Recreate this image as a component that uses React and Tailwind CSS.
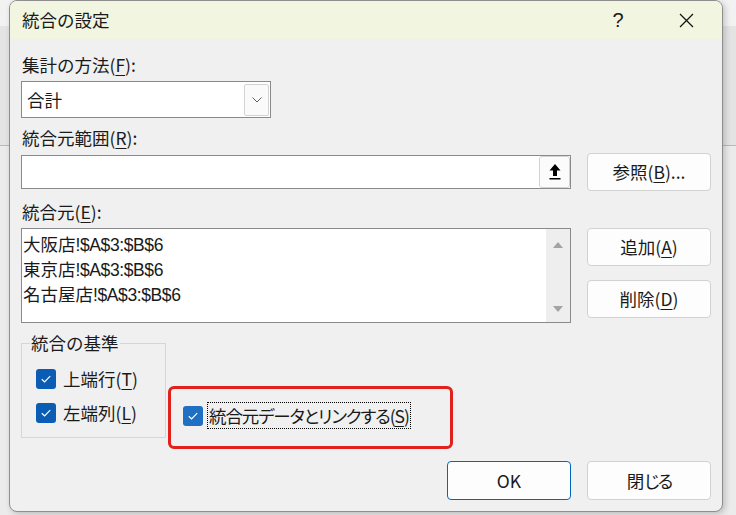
import React from "react";

const Key = ({ children }) => (
  <u className="underline decoration-1 underline-offset-[3px]">{children}</u>
);

const Check = ({ light }) => (
  <span
    className={`flex h-[20px] w-[20px] shrink-0 items-center justify-center rounded-[3px] ${
      light ? "bg-[#1f6fc2]" : "bg-[#0b5cb5]"
    }`}
  >
    <svg width="12" height="10" viewBox="0 0 12 10" fill="none" stroke="white" strokeWidth="1.2">
      <path d="M1.8 5.2 4.6 7.9 10.2 2.2" />
    </svg>
  </span>
);

const Btn = ({ children, primary, className = "" }) => (
  <button
    className={`flex w-[124px] items-center justify-center rounded-[4px] border bg-[#fdfdfd] ${
      primary ? "border-[#0067c0]" : "border-[#d1d1d1]"
    } ${className}`}
  >
    {children}
  </button>
);

const Ref = ({ children }) => (
  <span className="font-['Liberation_Sans',sans-serif] tracking-[-0.4px]">{children}</span>
);

export default function App() {
  return (
    <div className="h-[515px] w-[736px] overflow-hidden bg-[#ebebeb] bg-[linear-gradient(to_bottom,#f2f2f2_0,#f2f2f2_26px,#e4e4e4_26px,#e4e4e4_145px,#b9b9b9_145px,#b9b9b9_146px,transparent_146px),linear-gradient(#cdcdcd_1px,transparent_1px),linear-gradient(90deg,#cdcdcd_1px,transparent_1px)] bg-[length:100%_100%,104px_36px,104px_36px] bg-[position:0_0,4px_2px,4px_2px] bg-no-repeat font-['Noto_Sans_CJK_JP','Noto_Sans',sans-serif] text-[#1a1a1a]">
      <div className="ml-[9px] flex h-[512px] w-[714px] flex-col overflow-hidden rounded-[8px] border border-[#8e8e8e] bg-[#f0f0f0] shadow-[2px_2px_6px_rgba(0,0,0,0.2)]">
        {/* title bar */}
        <div className="flex h-[38px] shrink-0 items-center bg-[#f2f5df] pl-[12px]">
          <span className="text-[17.5px] leading-[24px]">統合の設定</span>
          <span className="ml-auto w-[46px] text-center font-['Liberation_Sans',sans-serif] text-[20px] leading-[24px]">?</span>
          <span className="ml-[22px] mr-[13px] flex w-[46px] justify-center">
            <svg width="15" height="15" viewBox="0 0 15 15" stroke="#111" strokeWidth="1.2">
              <path d="M1 1 14 14M14 1 1 14" />
            </svg>
          </span>
        </div>

        <div className="flex flex-col px-[11px] pt-[14px] text-[17.5px] leading-[24px]">
          <div className="pl-[1px]">
            集計の方法(<Key>F</Key>):
          </div>
          <div className="mt-[4px] flex h-[37px] w-[250px] items-center border border-[#8a8a8a] bg-white pl-[5px] pr-[1px]">
            <span>合計</span>
            <span className="ml-auto flex h-[32px] w-[25px] items-center justify-center rounded-[2px] border border-[#d3d3d3] bg-[#fafafa]">
              <svg width="10" height="6" viewBox="0 0 10 6" fill="none" stroke="#606060" strokeWidth="1">
                <path d="M0.5 0.5 5 5 9.5 0.5" />
              </svg>
            </span>
          </div>

          <div className="mt-[8px] pl-[1px]">
            統合元範囲(<Key>R</Key>):
          </div>
          <div className="mt-[3px] flex h-[38px] items-center">
            <div className="flex h-[34px] w-[550px] items-center justify-end border border-[#8a8a8a] bg-white">
              <span className="flex h-[32px] w-[31px] items-center justify-center rounded-[3px] border border-[#d3d3d3] bg-[#fbfbfb]">
                <svg width="12" height="16" viewBox="0 0 12 16" fill="#000">
                  <path d="M6 0 11.5 6.5H8V12H4V6.5H0.5Z" />
                  <rect x="0.5" y="14" width="11" height="1.5" />
                </svg>
              </span>
            </div>
            <Btn className="ml-auto h-[38px]">
              参照(<Key>B</Key>)...
            </Btn>
          </div>

          <div className="mt-[9px] pl-[1px]">
            統合元(<Key>E</Key>):
          </div>
          <div className="mt-[4px] flex">
            <div className="flex h-[95px] w-[550px] border border-[#8a8a8a] bg-white">
              <div className="flex-1 pl-[1px] pt-[3px] leading-[23px]">
                <div>
                  大阪店<Ref>!$A$3:$B$6</Ref>
                </div>
                <div>
                  東京店<Ref>!$A$3:$B$6</Ref>
                </div>
                <div>
                  名古屋店<Ref>!$A$3:$B$6</Ref>
                </div>
              </div>
              <div className="flex w-[24px] flex-col items-center justify-between bg-[#eeeeee] pb-[10px] pt-[13px]">
                <svg width="10" height="6" viewBox="0 0 10 6" fill="#a3a3a3">
                  <path d="M0 6 5 0 10 6Z" />
                </svg>
                <svg width="10" height="6" viewBox="0 0 10 6" fill="#a3a3a3">
                  <path d="M0 0 5 6 10 0Z" />
                </svg>
              </div>
            </div>
            <div className="ml-auto flex flex-col">
              <Btn className="h-[38px]">
                追加(<Key>A</Key>)
              </Btn>
              <Btn className="mt-[14px] h-[38px]">
                削除(<Key>D</Key>)
              </Btn>
            </div>
          </div>

          <div className="mt-[8px] flex items-start">
            <fieldset className="w-[145px] border border-[#d6d6d6] pb-[12px] pl-[8px]">
              <legend className="px-[1px]">統合の基準</legend>
              <div className="ml-[6px] mt-[12px] flex flex-col gap-[10px]">
                <div className="flex h-[24px] items-center gap-[7px]">
                  <Check />
                  <span>
                    上端行(<Key>T</Key>)
                  </span>
                </div>
                <div className="flex h-[24px] items-center gap-[7px]">
                  <Check />
                  <span>
                    左端列(<Key>L</Key>)
                  </span>
                </div>
              </div>
            </fieldset>
            <div className="ml-[2px] mt-[55px] h-[63px] w-[285px] rounded-[6px] border-[3px] border-[#e3211c] pl-[12px] pt-[13px]">
              <div className="flex items-center">
                <Check light />
                <span className="ml-[4px] flex h-[27px] items-center border border-dotted border-black px-[1px] tracking-[-1.1px] [font-feature-settings:'palt']">
                  統合元データとリンクする(<Key>S</Key>)
                </span>
              </div>
            </div>
          </div>

          <div className="mt-[12px] flex justify-end gap-[16px]">
            <Btn primary className="h-[39px]">
              OK
            </Btn>
            <Btn className="h-[39px] [font-feature-settings:'palt']">
              閉<span className="tracking-[-2px]">じる</span>
            </Btn>
          </div>
        </div>
      </div>
    </div>
  );
}
